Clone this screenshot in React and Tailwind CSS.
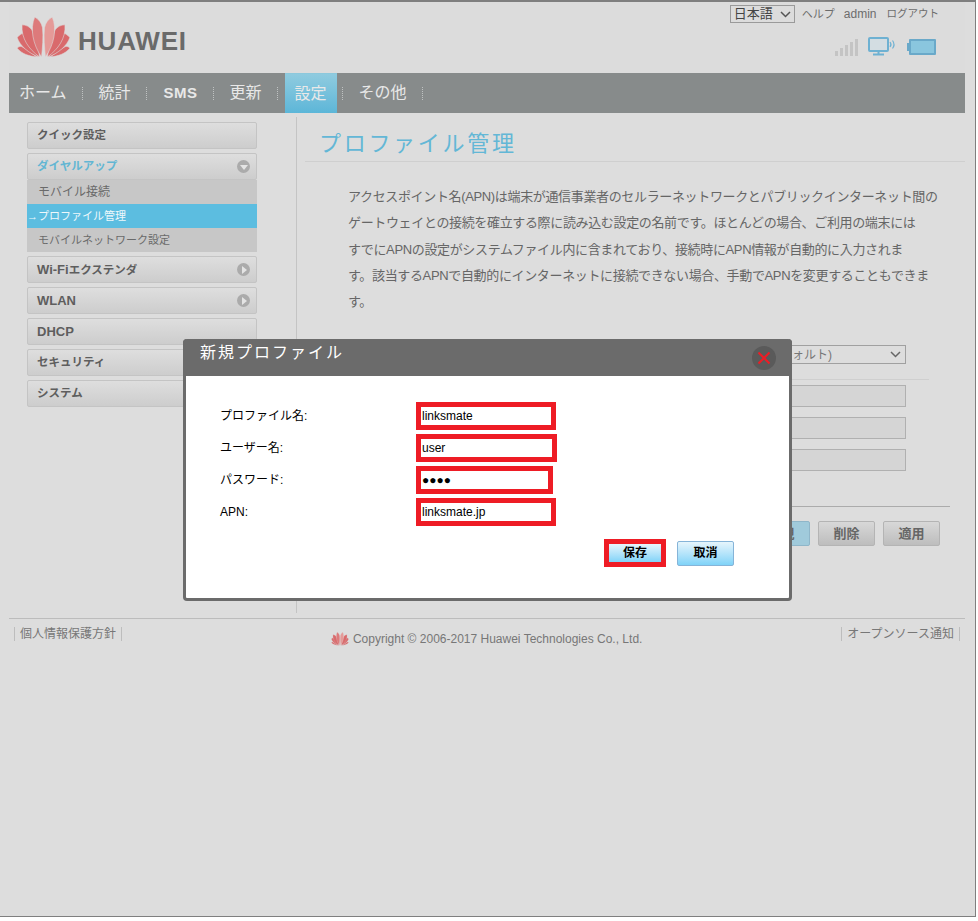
const font = { fontFamily: '"Liberation Sans", "Noto Sans CJK JP", sans-serif' };

const Petals = ({ className }) => (
  <svg viewBox="0 0 56 42" className={className}>
    <g fill="#d96a6c" stroke="#dcdcdc" strokeWidth="0.600">
      <path d="M21 41C13 40 6 38 1 32c1-1 2-2 4-2 6 3 11 7 16 11z" />
      <path d="M35 41C43 40 50 38 55 32c-1-1-2-2-4-2-6 3-11 7-16 11z" />
      <path d="M23 41C13 37 4 30 1 21c2-2 4-4 6-4 6 8 12 16 16 24z" />
      <path d="M33 41C43 37 52 30 55 21c-2-2-4-4-6-4-6 8-12 16-16 24z" />
      <path d="M24 41C13 33 5 22 6 8c4 0 8 2 10 5 4 9 7 18 8 28z" />
      <path d="M32 41C43 33 51 22 50 8c-4 0-8 2-10 5-4 9-7 18-8 28z" />
      <path d="M26 41C17 28 14 12 19 0c4 2 7 6 8 11 1 10 0 20-1 30z" fill="#dd7a7b" />
      <path d="M30 41C39 28 42 12 37 0c-4 2-7 6-8 11-1 10 0 20 1 30z" fill="#e59a98" />
    </g>
  </svg>
);

const navItems = ["ホーム", "統計", "SMS", "更新", "設定", "その他"];

const NavBar = () => (
  <div className="mx-[9px] flex h-10 w-[956px] bg-[#878b8b] text-[16px] text-[#e8e8e8]">
    {navItems.map((item) => (
      <div key={item} className="flex items-center">
        {item === "設定" && <span className="w-px" />}
        <div
          className={
            item === "設定"
              ? "flex h-full w-[52px] items-center justify-center border-t border-[#8cc8dc] bg-gradient-to-b from-[#8fcbdf] to-[#5cb6d8]"
              : item === "SMS"
                ? "pl-[11px] pr-[10px]"
                : "px-[10px]"
          }
        >
          <span className={item === "SMS" ? "text-[15px] font-bold tracking-[0.5px]" : ""}>{item}</span>
        </div>
        <span className="ml-[5px] mr-[6px] h-[13px] border-l border-dotted border-[#bfc2c2]" />
      </div>
    ))}
  </div>
);

const MenuHead = ({ label, arrow, active }) => (
  <div
    className={
      "flex h-[27px] items-center justify-between rounded-[2px] border border-[#c4c4c4] bg-gradient-to-b from-[#dedede] to-[#cdcdcd] pl-[9px] pr-[6px] text-[11.500px] font-bold " +
      (active ? "text-[#62b6d3]" : "text-[#5e5e5e]")
    }
  >
    <span>{label}</span>
    {arrow && (
      <span className="flex h-[13px] w-[13px] items-center justify-center rounded-full bg-[#ababab]">
        {arrow === "down" ? (
          <span className="mt-[2px] border-x-[4px] border-t-[5px] border-x-transparent border-t-[#e4e4e4]" />
        ) : (
          <span className="ml-[1px] border-y-[4px] border-l-[5px] border-y-transparent border-l-[#e4e4e4]" />
        )}
      </span>
    )}
  </div>
);

const Sidebar = () => (
  <div className="ml-[27px] mt-[5px] flex w-[230px] flex-col gap-1">
    <MenuHead label="クイック設定" />
    <div>
      <MenuHead label="ダイヤルアップ" arrow="down" active />
      <div className="bg-[#c7c7c7] text-[11px] text-[#6a6a6a]">
        <div className="flex h-6 items-center pl-[11px] text-[12px]">モバイル接続</div>
        <div className="flex h-6 items-center bg-[#5cbde0] text-[#eef8fb]">
          <span className="w-[11px] leading-none">→</span>
          <span>プロファイル管理</span>
        </div>
        <div className="flex h-6 items-center pl-[11px]">モバイルネットワーク設定</div>
      </div>
    </div>
    <MenuHead label={<><span className="text-[13px]">Wi-Fi</span>エクステンダ</>} arrow="right" />
    <MenuHead label={<span className="text-[13px]">WLAN</span>} arrow="right" />
    <MenuHead label={<span className="text-[13px]">DHCP</span>} />
    <MenuHead label="セキュリティ" />
    <MenuHead label="システム" />
  </div>
);

const GhostButton = ({ label, blue }) => (
  <div
    className={
      "flex h-[25px] w-[57px] items-center justify-center rounded-[2px] border text-[13px] font-bold text-[#666666] " +
      (blue
        ? "border-[#8fb6c9] bg-[#a0cadb]"
        : "border-[#b4b4b4] bg-gradient-to-b from-[#d8d8d8] to-[#bdbdbd]")
    }
  >
    {label}
  </div>
);

const Content = () => (
  <div className="ml-[8px] flex-1 pt-[10px]">
    <div className="ml-[14px] text-[22px] leading-[33px] tracking-[2.700px] text-[#63b7d6]">プロファイル管理</div>
    <div className="mt-[1px] h-px w-[660px] bg-[#cfcfcf]" />
    <p className="ml-[43px] mt-[22px] whitespace-nowrap text-[13px] leading-[26.300px] tracking-[-0.350px] text-[#666666]">
      アクセスポイント名(APN)は端末が通信事業者のセルラーネットワークとパブリックインターネット間の
      <br />
      ゲートウェイとの接続を確立する際に読み込む設定の名前です。ほとんどの場合、ご利用の端末には
      <br />
      すでにAPNの設定がシステムファイル内に含まれており、接続時にAPN情報が自動的に入力されま
      <br />
      す。該当するAPNで自動的にインターネットに接続できない場合、手動でAPNを変更することもできま
      <br />
      す。
    </p>
    <div className="ml-[410px] mt-[30px] flex h-[19px] w-[191px] items-center justify-between border border-[#a0a0a0] pl-[76px] pr-[4px] text-[12px] text-[#777777]">
      <span>ォルト)</span>
      <svg width="11" height="7" viewBox="0 0 11 7" fill="none" stroke="#666666" strokeWidth="1.500">
        <path d="M1 1l4.500 4.500L10 1" />
      </svg>
    </div>
    <div className="ml-[410px] mt-[15px] h-px w-[214px] bg-[#cfcfcf]" />
    <div className="ml-[410px] mt-[5px] flex w-[191px] flex-col gap-[10px]">
      <div className="h-[22px] border border-[#b0b0b0] bg-[#d5d5d5]" />
      <div className="h-[22px] border border-[#b0b0b0] bg-[#d5d5d5]" />
      <div className="h-[22px] border border-[#b0b0b0] bg-[#d5d5d5]" />
    </div>
    <div className="ml-[410px] mt-[35px] h-px w-[235px] bg-[#ababab]" />
    <div className="ml-[410px] mt-[14px] flex w-[225px] justify-end gap-2">
      <GhostButton label="新規" blue />
      <GhostButton label="削除" />
      <GhostButton label="適用" />
    </div>
  </div>
);

const Footer = () => (
  <div className="mx-[9px] mt-[5px] h-[40px] w-[956px] border-t border-[#bcbcbc] text-[12px] text-[#777777]">
    <div className="flex items-start justify-between px-[5px] pt-[8px]">
      <span className="border-x border-[#bdbdbd] px-[5px] leading-[14px]">個人情報保護方針</span>
      <div className="ml-[10px] mt-[3px] flex items-center gap-[4px]">
        <Petals className="h-[14px] w-[18px]" />
        <span>Copyright © 2006-2017 Huawei Technologies Co., Ltd.</span>
      </div>
      <span className="border-x border-[#bdbdbd] px-[5px] leading-[14px]">オープンソース通知</span>
    </div>
  </div>
);

const fields = [
  { label: "プロファイル名:", value: "linksmate", width: "w-[140px]" },
  { label: "ユーザー名:", value: "user", width: "w-[141px]" },
  { label: "パスワード:", value: "●●●●", width: "w-[137px]" },
  { label: "APN:", value: "linksmate.jp", width: "w-[140px]" },
];

const ProfileModal = () => (
  <div className="absolute left-[183px] top-[337px] h-[262px] w-[609px] rounded-[4px] border-x-[3px] border-b-[3px] border-[#6b6b6b] bg-white">
    <div className="-mx-[3px] flex h-[37px] items-center justify-between rounded-t-[4px] bg-[#6b6b6b] pl-[17px] pr-[16px] text-[16px] tracking-[2px] text-white">
      <span className="mb-[10px]">新規プロファイル</span>
      <span className="flex h-6 w-6 items-center justify-center rounded-full bg-[#5a5a5a]">
        <svg width="14" height="14" viewBox="0 0 14 14" stroke="#ee1c25" strokeWidth="2">
          <path d="M1.500 1.500l11 11M12.500 1.500l-11 11" />
        </svg>
      </span>
    </div>
    <div className="ml-[34px] mt-[26px] flex flex-col gap-[4px] text-[12px] text-black">
      {fields.map((f) => (
        <div key={f.label} className="flex h-7 items-center">
          <span className="w-[196px]">{f.label}</span>
          <div className={"flex h-[28px] items-center border-[5px] border-[#ee1c25] pl-[1px] " + f.width}>
            <span className="text-[12px]">{f.value}</span>
          </div>
        </div>
      ))}
    </div>
    <div className="mt-[13px] flex items-center justify-end gap-[11px] pr-[55px]">
      <div className="border-[5px] border-[#ee1c25]">
        <div className="flex h-[18px] w-[52px] items-center justify-center bg-gradient-to-b from-[#e6f5fc] to-[#7fd3f8] text-[12px] font-bold">
          保存
        </div>
      </div>
      <div className="flex h-[25px] w-[57px] items-center justify-center rounded-[2px] border border-[#86b4d8] bg-gradient-to-b from-[#e6f5fc] to-[#7fd3f8] text-[12px] font-bold">
        取消
      </div>
    </div>
  </div>
);

export default function App() {
  return (
    <div className="h-[921px] w-[978px] bg-white" style={font}>
      <div className="relative h-[917px] w-[976px] border-r border-b border-t-2 border-[#7f7f7f] bg-[#dddddd]">
        {/* header */}
        <div className="relative mx-[9px] flex h-[71px] w-[956px] justify-between bg-[#dcdcdc]">
          <div className="ml-[7px] mt-[15px] flex items-end gap-[7px] self-start">
            <Petals className="h-[41px] w-[55px]" />
            <span className="mb-[2px] text-[26px] font-bold leading-[30px] tracking-[0.8px] text-[#6a6a6a]">HUAWEI</span>
          </div>
          <div className="flex flex-col items-end pr-[26px] pt-[3px]">
            <div className="flex items-center text-[12px] text-[#6c6c6c]">
              <div className="mr-[7px] flex h-[18px] w-[65px] items-center justify-between border border-[#9a9a9a] px-[3px] text-[13px] text-[#444444]">
                <span>日本語</span>
                <svg width="11" height="7" viewBox="0 0 11 7" fill="none" stroke="#555555" strokeWidth="1.500">
                  <path d="M1 1l4.500 4.500L10 1" />
                </svg>
              </div>
              <span className="mr-[9px] text-[11px]">ヘルプ</span>
              <span className="mr-[10px]">admin</span>
              <span className="text-[10.500px]">ログアウト</span>
            </div>
            <div className="mr-[3px] mt-[14px] flex items-center gap-[10px]">
              <svg width="24" height="18" viewBox="0 0 24 18" className="-mr-px">
                <g fill="#c4c4c4">
                  <rect x="0" y="13" width="3" height="5" />
                  <rect x="5" y="10" width="3" height="8" />
                  <rect x="10" y="7" width="3" height="11" />
                  <rect x="15" y="4" width="3" height="14" />
                  <rect x="20" y="1" width="3" height="17" />
                </g>
              </svg>
              <svg width="29" height="19" viewBox="0 0 29 19" fill="#d3dde2" stroke="#6eb1d2">
                <rect x="1" y="1" width="19" height="13" rx="1" strokeWidth="2" />
                <path d="M10.500 14v3M5 17.500h11" strokeWidth="2" fill="none" />
                <path d="M22 5q2 2.500 0 5M24.500 3.500q3 4 0 8" strokeWidth="1.200" fill="none" />
              </svg>
              <div className="flex h-[16px] w-[29px] items-center">
                <span className="h-[8px] w-[2px] bg-[#6aa9c9]" />
                <span className="h-[16px] w-[27px] rounded-[1px] border-2 border-[#6aa9c9] bg-[#8ac6de]" />
              </div>
            </div>
          </div>
        </div>
        <NavBar />
        <div className="mt-[4px] flex h-[496px] w-[965px]">
          <Sidebar />
          <div className="ml-[39px] h-full w-px bg-[#c4c4c4]" />
          <Content />
        </div>
        <Footer />
        <ProfileModal />
      </div>
    </div>
  );
}
